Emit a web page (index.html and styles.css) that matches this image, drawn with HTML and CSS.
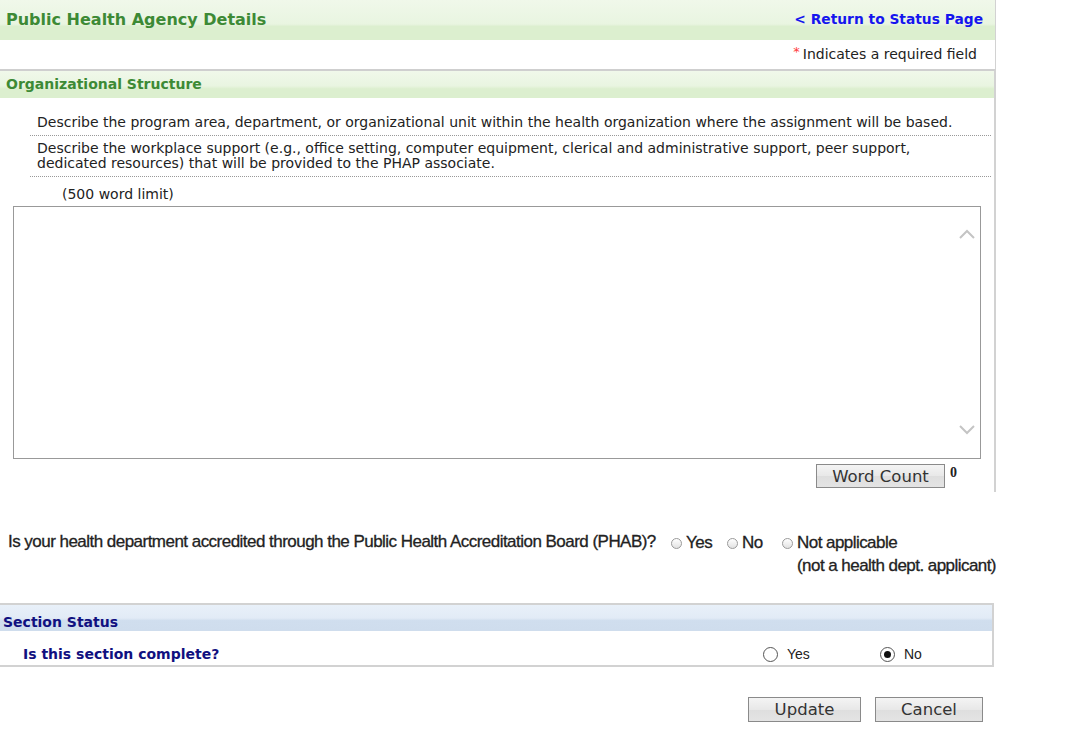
FILE: index.html
```html
<!DOCTYPE html>
<html lang="en">
<head>
  <meta charset="UTF-8" />
  <title>Public Health Agency Details</title>
  <link rel="stylesheet" href="styles.css">
</head>
<body>

<div class="page">
  <div class="page-head">
    <h1>Public Health Agency Details</h1>
    <a class="back-link" href="#">&lt; Return to Status Page</a>
  </div>

  <div class="required-note"><span class="star">*</span>Indicates a required field</div>

  <div class="section">
    <div class="section-title">Organizational Structure</div>

    <div class="desc">Describe the program area, department, or organizational unit within the health organization where the assignment will be based.</div>
    <div class="desc">Describe the workplace support (e.g., office setting, computer equipment, clerical and administrative support, peer support,<br>dedicated resources) that will be provided to the PHAP associate.</div>

    <div class="limit">(500 word limit)</div>

    <div class="answer-box">
      <div class="answer-text"></div>
      <div class="scroll-col">
        <svg width="18" height="12" viewBox="0 0 18 12"><path d="M2 10 L9 3 L16 10" fill="none" stroke="#c4c4c4" stroke-width="2"/></svg>
        <svg width="18" height="12" viewBox="0 0 18 12"><path d="M2 2 L9 9 L16 2" fill="none" stroke="#c4c4c4" stroke-width="2"/></svg>
      </div>
    </div>

    <div class="count-row">
      <button class="btn count-btn">Word Count</button>
      <span class="count">0</span>
    </div>
  </div>

  <div class="question">
    <div class="q-text">Is your health department accredited through the Public Health Accreditation Board (PHAB)?</div>
    <div class="q-opts">
      <label class="opt opt-yes"><span class="dot"></span>Yes</label>
      <label class="opt opt-no"><span class="dot"></span>No</label>
      <label class="opt"><span class="dot"></span><span>Not applicable<br><span class="na-note">(not a health dept. applicant)</span></span></label>
    </div>
  </div>

  <div class="status">
    <div class="status-title">Section Status</div>
    <div class="status-row">
      <span class="status-q">Is this section complete?</span>
      <label class="s-opt s-yes"><span class="ring"></span>Yes</label>
      <label class="s-opt s-no"><span class="ring checked"></span>No</label>
    </div>
  </div>

  <div class="actions">
    <button class="btn update-btn">Update</button>
    <button class="btn cancel-btn">Cancel</button>
  </div>
</div>

</body>
</html>
```

FILE: styles.css
```css
body {
  margin: 0;
  background: #fff;
  font-family: "DejaVu Sans", Verdana, sans-serif;
  color: #222;
}
.page {
  width: 1082px;
}
.page-head {
  width: 996px;
  height: 40px;
  box-sizing: border-box;
  display: flex;
  justify-content: space-between;
  align-items: center;
  padding: 0 12px 2px 6px;
  background: linear-gradient(#f0f8ea, #e9f5e1 60%, #dcefcf 66%, #dcefcf);
  border-right: 1px solid #d2d2d2;
}
.page-head h1 {
  margin: 0;
  font-size: 16px;
  color: #3d8a35;
}
.back-link {
  color: #1515ee;
  font-weight: bold;
  font-size: 13.8px;
  text-decoration: none;
}
.required-note {
  width: 996px;
  height: 29px;
  box-sizing: border-box;
  text-align: right;
  padding: 4px 18px 0 0;
  font-size: 14px;
  border-right: 1px solid #d2d2d2;
}
.star {
  color: #ff3b3b;
  font-size: 13px;
  vertical-align: 3px;
  margin-right: 3px;
}
.section {
  width: 996px;
  box-sizing: border-box;
  border-top: 2px solid #cfcfcf;
  border-right: 2px solid #d2d2d2;
  padding-bottom: 2px;
}
.section-title {
  height: 27px;
  line-height: 26px;
  padding-left: 6px;
  font-size: 14px;
  font-weight: bold;
  color: #3d8a35;
  background: linear-gradient(#f0f8ea, #e9f5e1 55%, #dcefcf 66%, #dcefcf);
  margin-bottom: 12px;
}
.desc {
  margin: 0 3px 0 30px;
  padding: 5px 0 5px 7px;
  font-size: 14px;
  line-height: 15px;
  color: #222;
  border-bottom: 1px dotted #999;
}
.limit {
  margin: 9px 0 4px 62px;
  font-size: 14px;
  line-height: 16px;
}
.answer-box {
  margin-left: 13px;
  width: 968px;
  height: 253px;
  box-sizing: border-box;
  border: 1px solid #999;
  display: flex;
}
.answer-text {
  flex: 1;
}
.scroll-col {
  width: 22px;
  display: flex;
  flex-direction: column;
  justify-content: space-between;
  padding: 21px 0 22px;
}
.count-row {
  display: flex;
  align-items: flex-start;
  padding: 5px 0 0 816px;
  height: 26px;
}
.btn {
  font-family: "DejaVu Sans", Verdana, sans-serif;
  color: #333;
  background: linear-gradient(#f4f4f4, #e8e8e8 50%, #dedede 52%, #e4e4e4);
  border: 1px solid #8a8a8a;
  padding: 0;
  height: 24px;
  cursor: pointer;
}
.count-btn {
  width: 129px;
  font-size: 16.5px;
}
.count {
  margin-left: 5px;
  font-family: "Liberation Serif", serif;
  font-weight: bold;
  font-size: 14px;
  line-height: 17px;
}
.question {
  display: flex;
  align-items: flex-start;
  margin-top: 40px;
  padding-left: 8px;
  font-family: "Liberation Sans", Arial, sans-serif;
  font-size: 17px;
  color: #222;
  height: 71px;
}
.q-text {
  width: 663px;
  flex-shrink: 0;
  letter-spacing: -0.53px;
  -webkit-text-stroke: 0.3px #222;
}
.q-opts {
  display: flex;
  padding-top: 1px;
}
.opt {
  display: flex;
  align-items: flex-start;
  letter-spacing: -0.55px;
  -webkit-text-stroke: 0.3px #222;
}
.opt-yes {
  width: 56px;
}
.opt-no {
  width: 55px;
}
.na-note {
  display: inline-block;
  margin-top: 3px;
}
.dot {
  width: 11px;
  height: 11px;
  box-sizing: border-box;
  border: 1px solid #9a9a9a;
  border-radius: 50%;
  background: linear-gradient(#fff, #e2e2e2);
  margin: 5px 4px 0 0;
  flex-shrink: 0;
}
.status {
  width: 994px;
  height: 64px;
  box-sizing: border-box;
  border: 2px solid #d2d2d2;
  border-left: 0;
}
.status-title {
  height: 26px;
  box-sizing: border-box;
  padding: 9px 0 0 3px;
  line-height: 16px;
  font-size: 14px;
  font-weight: bold;
  color: #101080;
  background: linear-gradient(#e8f0f9, #e2ebf6 50%, #d0deee 60%, #cfdded);
}
.status-row {
  display: flex;
  align-items: center;
  height: 34px;
  box-sizing: border-box;
  padding: 12px 0 0 23px;
}
.status-q {
  font-size: 14px;
  font-weight: bold;
  color: #101080;
  width: 740px;
}
.s-opt {
  display: flex;
  align-items: center;
  font-family: "Liberation Sans", Arial, sans-serif;
  font-size: 14px;
  color: #222;
}
.s-yes {
  width: 117px;
}
.ring {
  width: 15px;
  height: 15px;
  box-sizing: border-box;
  border: 1px solid #555;
  border-radius: 50%;
  background: #fff;
  margin-right: 9px;
  display: flex;
  align-items: center;
  justify-content: center;
}
.ring.checked::after {
  content: "";
  width: 7px;
  height: 7px;
  border-radius: 50%;
  background: #111;
}
.actions {
  display: flex;
  padding: 30px 0 0 748px;
  gap: 14px;
}
.update-btn,
.cancel-btn {
  font-size: 16.5px;
  height: 25px;
}
.update-btn {
  width: 113px;
}
.cancel-btn {
  width: 108px;
}
```
